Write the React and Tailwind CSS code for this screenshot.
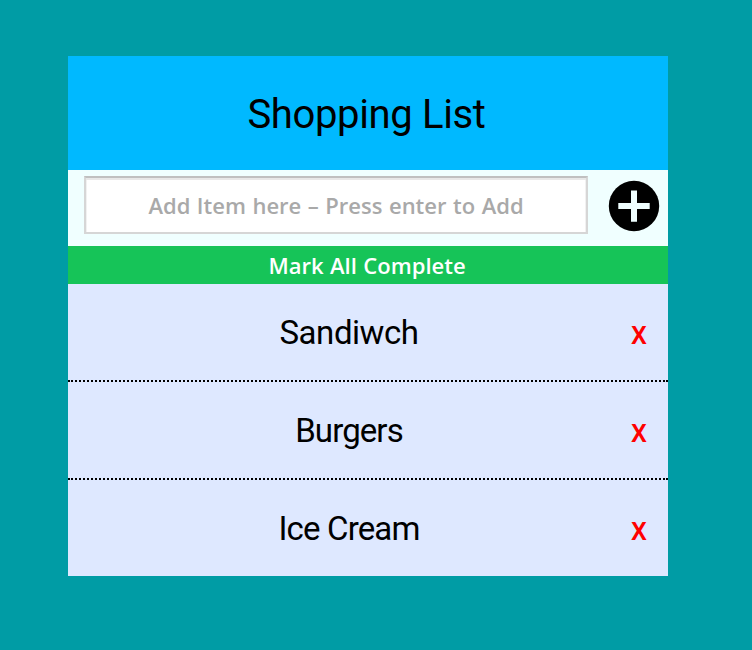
const items = [
  { name: "Sandiwch", spacing: "tracking-[-0.45px]" },
  { name: "Burgers", spacing: "tracking-[-0.9px]" },
  { name: "Ice Cream", spacing: "tracking-[-0.85px]" },
];

export default function App() {
  return (
    <div className="h-[650px] w-[752px] bg-[#009ca5] pl-[68px] pt-[56px] text-black">
      <main className="h-[520px] w-[600px] bg-[#dee8ff]">
        <header className="flex h-[114px] items-center justify-center bg-[#00b9ff] pt-[3px] pr-[3px]">
          <h1 className="font-['Roboto',sans-serif] text-[40px] leading-none tracking-[-0.35px]">Shopping List</h1>
        </header>
        <form className="flex h-[76px] items-start bg-[#f0ffff] pl-4 pt-[6px]" onSubmit={(e) => e.preventDefault()}>
          <input
            className="h-[58px] w-[504px] border-2 border-[#d6d6d6] border-t-[#c0c0c0] bg-white text-center font-['Open_Sans',sans-serif] text-[22px] font-semibold [word-spacing:0.8px] shadow-[inset_0_2px_0_#e8e8e8,inset_1px_0_0_#f1f1f1,inset_-1px_0_0_#f1f1f1] outline-none placeholder:text-[#a9a9a9]"
            placeholder="Add Item here – Press enter to Add"
          />
          <button className="ml-[20px] mt-[4px]" aria-label="Add item">
            <svg width="52" height="52" viewBox="0 0 52 52">
              <circle cx="26" cy="26" r="25.2" fill="#000" />
              <path d="M10.3 26H41.7M26 10.5V41.7" stroke="#f0ffff" strokeWidth="6" />
            </svg>
          </button>
        </form>
        <button className="flex h-[38px] w-full items-center justify-center bg-[#16c458] pr-[2px] font-['Open_Sans',sans-serif] text-[22px] font-semibold [word-spacing:0.8px] text-white">
          Mark All Complete
        </button>
        <ul>
          {items.map(({ name, spacing }) => (
            <li key={name} className="flex h-[98px] items-center border-b-2 border-dotted border-black last:h-[96px] last:border-b-0">
              <span className={`ml-[16px] w-[530px] pt-px text-center font-['Roboto',sans-serif] text-[33px] leading-none ${spacing}`}>{name}</span>
              <button className="ml-[16px] scale-x-90 font-['Open_Sans',sans-serif] text-[32px] font-semibold leading-none text-[#ff0000]">x</button>
            </li>
          ))}
        </ul>
      </main>
    </div>
  );
}
